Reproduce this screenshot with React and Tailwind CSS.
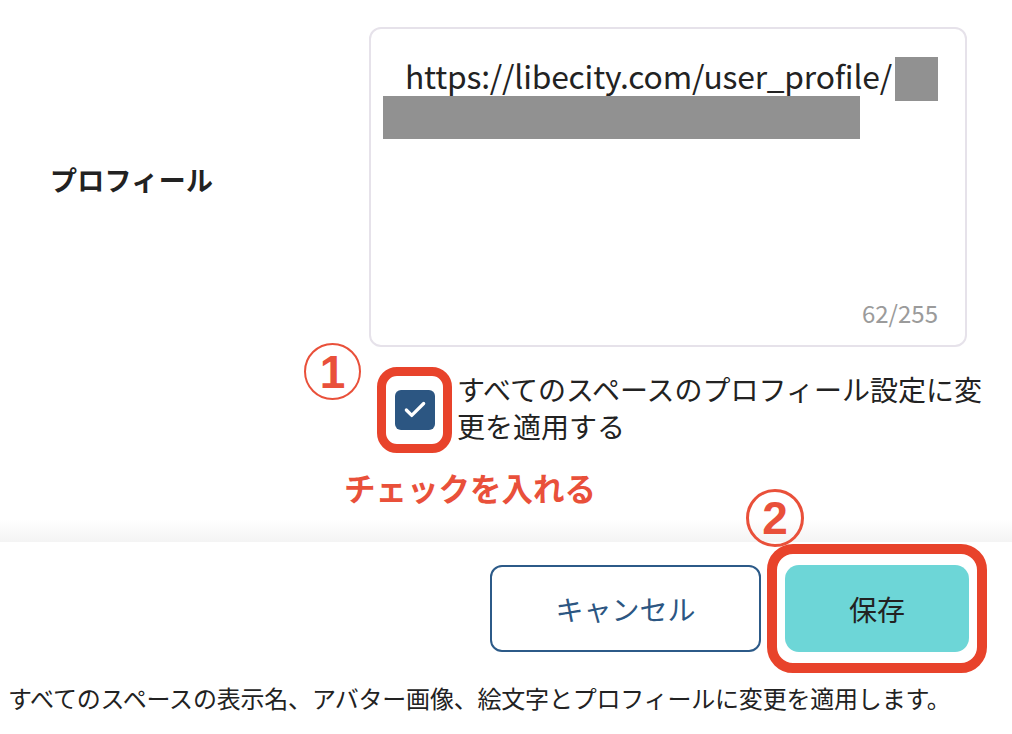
import { Check } from 'lucide-react'

const FONT = 'font-["Noto_Sans_CJK_JP","Noto_Sans",sans-serif]'

const App = () => {
  return (
    <div className={`relative w-[1012px] h-[734px] overflow-hidden bg-white text-[#222] ${FONT}`}>
      {/* Profile field */}
      <div className="flex pt-[27px]">
        <div className="w-[369px] flex items-center pl-[50px] pb-[14px]">
          <span className="text-[27px] font-bold tracking-[0.3px]">プロフィール</span>
        </div>
        <div className="w-[598px] h-[320px] border-2 border-[#e6e2ea] rounded-[12px] flex flex-col pl-[12px] pt-[28px] pr-[27px] pb-[20px]">
          <div className="flex items-center h-[44px] pl-[22px]">
            <span className="text-[31.8px] leading-none tracking-[-0.2px] -mt-[6px]">https://libecity.com/user_profile/</span>
            <span className="inline-block w-[45px] h-[44px] bg-[#919191] ml-[3px]" />
          </div>
          <div className="w-[477px] h-[43px] bg-[#919191] -mt-[5px]" />
          <div className="mt-auto text-right text-[24px] leading-none text-[#9b9b9b]">62/255</div>
        </div>
      </div>

      {/* Apply-to-all checkbox */}
      <div className="relative flex items-center pl-[377px] mt-[20px]">
        <div className="absolute left-[304px] -top-[24px] w-[57px] h-[57px] rounded-full border-2 border-[#e9503a] flex items-center justify-center">
          <span className="text-[46px] font-bold leading-none text-[#e9503a] font-['Liberation_Sans_Narrow','Liberation_Sans',sans-serif]">1</span>
        </div>
        <div className="w-[75px] h-[86px] border-[9px] border-[#e8432b] rounded-[20px] flex items-center justify-center shrink-0">
          <div className="w-[40px] h-[40px] rounded-[6px] bg-[#2c5682] flex items-center justify-center">
            <Check size={26} strokeWidth={3} className="text-white" />
          </div>
        </div>
        <p className="ml-[5px] w-[540px] text-[28px] leading-[37px] -mt-[4px]">
          すべてのスペースのプロフィール設定に変更を適用する
        </p>
      </div>

      {/* Annotation */}
      <div className="pl-[344px] mt-[14px] text-[31.5px] font-bold leading-[40px] text-[#e9503a]">
        チェックを入れる
      </div>

      {/* Footer shade */}
      <div className="relative mt-[13px] h-[22px] bg-gradient-to-b from-white to-[#f4f4f4]">
        <div className="absolute left-[746px] -top-[31px] w-[58px] h-[58px] rounded-full border-[3px] border-[#e9503a] flex items-center justify-center">
          <span className="text-[46px] font-bold leading-none text-[#e9503a] font-['Liberation_Sans',sans-serif]">2</span>
        </div>
      </div>

      {/* Buttons */}
      <div className="flex items-center justify-end pr-[25px] mt-[2px] gap-[6px]">
        <button className="w-[271px] h-[87px] rounded-[12px] border-2 border-[#2c5a88] text-[#2c5682] text-[28px] bg-white">
          キャンセル
        </button>
        <div className="border-[10px] border-[#e8432b] rounded-[26px] px-[8px] py-[11px]">
          <button className="w-[184px] h-[87px] rounded-[14px] bg-[#6dd6d7] text-[#222] text-[28px]">
            保存
          </button>
        </div>
      </div>

      <p className="pl-[8px] mt-[8px] text-[24px] leading-[34px] tracking-[-0.2px]">
        すべてのスペースの表示名、アバター画像、絵文字とプロフィールに変更を適用します。
      </p>
    </div>
  )
}

export default App
